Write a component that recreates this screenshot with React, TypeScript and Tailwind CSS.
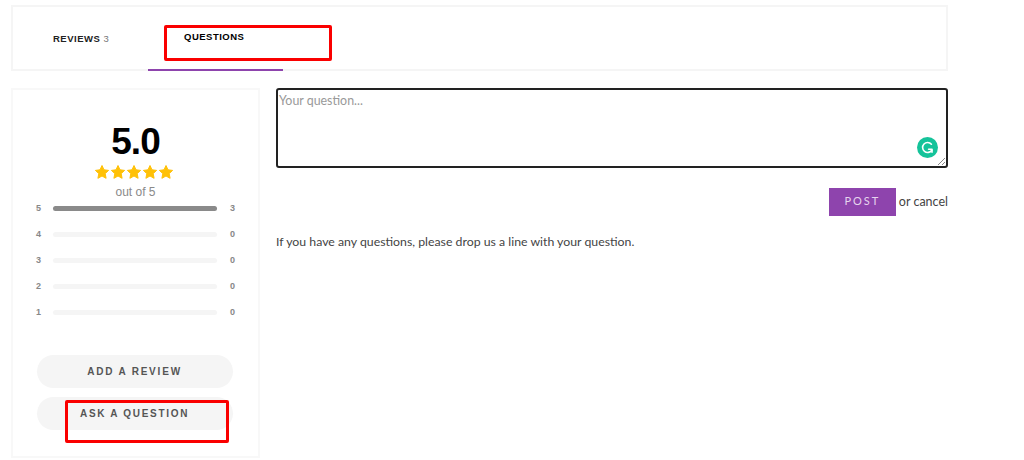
const bars = [
  { label: "5", count: 3, width: "100%" },
  { label: "4", count: 0, width: "0%" },
  { label: "3", count: 0, width: "0%" },
  { label: "2", count: 0, width: "0%" },
  { label: "1", count: 0, width: "0%" },
];

const Tabs = () => {
  return (
    <div className="relative h-[66px] w-[937px] border-2 border-[#f5f5f5] font-['Liberation_Sans',sans-serif]">
      <div className="flex pt-[26px] pl-[40px] text-[9.5px] font-bold tracking-[0.5px] leading-[12px]">
        <span className="text-[#222]">
          REVIEWS <span className="font-normal text-[#777]">3</span>
        </span>
      </div>
      <span className="absolute left-[171px] top-[24px] text-[9.5px] leading-[12px] font-bold tracking-[0.5px] text-black">
        QUESTIONS
      </span>
      <div className="absolute left-[135px] top-[62px] h-[2px] w-[135px] bg-[#8e44ad]" />
      <div className="absolute left-[151px] top-[18px] h-[36px] w-[168px] rounded-[2px] border-[3px] border-[#fa0000]" />
    </div>
  );
};

const Summary = () => {
  return (
    <aside className="relative flex h-[370px] w-[249px] shrink-0 flex-col items-center border-2 border-[#f8f8f8] font-['Liberation_Sans',sans-serif]">
      <div className="mt-[31px] text-[37px] leading-[42px] font-bold tracking-[-1px] text-black">5.0</div>
      <div className="mt-[1px] -ml-[3px] flex">
        {[0, 1, 2, 3, 4].map((i) => (
          <svg key={i} width="16" height="16" viewBox="0 0 16 16" fill="#ffc107" stroke="#ffc107" strokeWidth="1" strokeLinejoin="round">
            <path d="M8 1.5l2 4.3 4.6.6-3.4 3.2.9 4.7L8 12l-4.1 2.3.9-4.7-3.4-3.2 4.6-.6z" />
          </svg>
        ))}
      </div>
      <div className="mt-[5px] text-[12px] leading-[14px] text-[#8a8a8a]">out of 5</div>
      <div className="mt-[5px] flex w-full flex-col gap-[17px] pr-[23px] pl-[23px]">
        {bars.map((bar) => (
          <div key={bar.label} className="flex h-[9px] items-center text-[9px] font-bold text-[#888]">
            <span className="w-[17px]">{bar.label}</span>
            <div className="h-[5px] w-[164px] rounded-full bg-[#f5f5f5]">
              <div className="h-full rounded-full bg-[#8a8a8a]" style={{ width: bar.width }} />
            </div>
            <span className="ml-[13px]">{bar.count}</span>
          </div>
        ))}
      </div>
      <div className="mt-[38px] -ml-[2px] flex h-[33px] w-[196px] items-center justify-center rounded-full bg-[#f5f5f5] text-[10px] font-bold tracking-[1.8px] text-[#555]">
        ADD A REVIEW
      </div>
      <div className="mt-[9px] -ml-[2px] h-[33px] w-[196px] rounded-full bg-[#f5f5f5]" />
      <span className="absolute left-[67px] top-[318px] text-[10px] leading-[12px] font-bold tracking-[1.7px] text-[#555]">
        ASK A QUESTION
      </span>
      <div className="absolute left-[52px] top-[310px] h-[43px] w-[164px] rounded-[2px] border-[3px] border-[#fa0000]" />
    </aside>
  );
};

const QuestionForm = () => {
  return (
    <section className="ml-[16px] w-[672px] font-['Lato',sans-serif] text-[12.3px] text-[#444]">
      <div className="relative h-[80px] rounded-[3px] border-2 border-[#222] px-[1px] py-[2px] text-[12.4px] text-[#999]">
        Your question...
        <div className="absolute right-[8px] bottom-[8px] flex h-[21px] w-[21px] items-center justify-center rounded-full bg-[#15c39a]">
          <svg width="13" height="13" viewBox="0 0 13 13" fill="none" stroke="white" strokeWidth="1.6" strokeLinecap="round" strokeLinejoin="round">
            <path d="M10.4 3.2A5 5 0 1 0 10.8 9.2" />
            <path d="M7.6 8.2L11 8.2L11 11.2" />
          </svg>
        </div>
        <svg className="absolute right-0 bottom-0" width="9" height="9" viewBox="0 0 9 9" stroke="#888" strokeWidth="1">
          <path d="M1 8L8 1M5 8L8 5" />
        </svg>
      </div>
      <div className="mt-[20px] flex items-center justify-end">
        <div className="flex h-[28px] w-[67px] items-center justify-center bg-[#8e44ad] pb-[1px] text-[11px] tracking-[2px] text-[#e6d5ee]">
          POST
        </div>
        <span className="ml-[3px] text-[12.5px]">or cancel</span>
      </div>
      <p className="mt-[18px] leading-[16px]">If you have any questions, please drop us a line with your question.</p>
    </section>
  );
};

export default function App() {
  return (
    <div className="h-[460px] w-[1024px] overflow-hidden bg-white pt-[5px] pl-[11px]">
      <Tabs />
      <div className="mt-[17px] flex">
        <Summary />
        <QuestionForm />
      </div>
    </div>
  );
}
